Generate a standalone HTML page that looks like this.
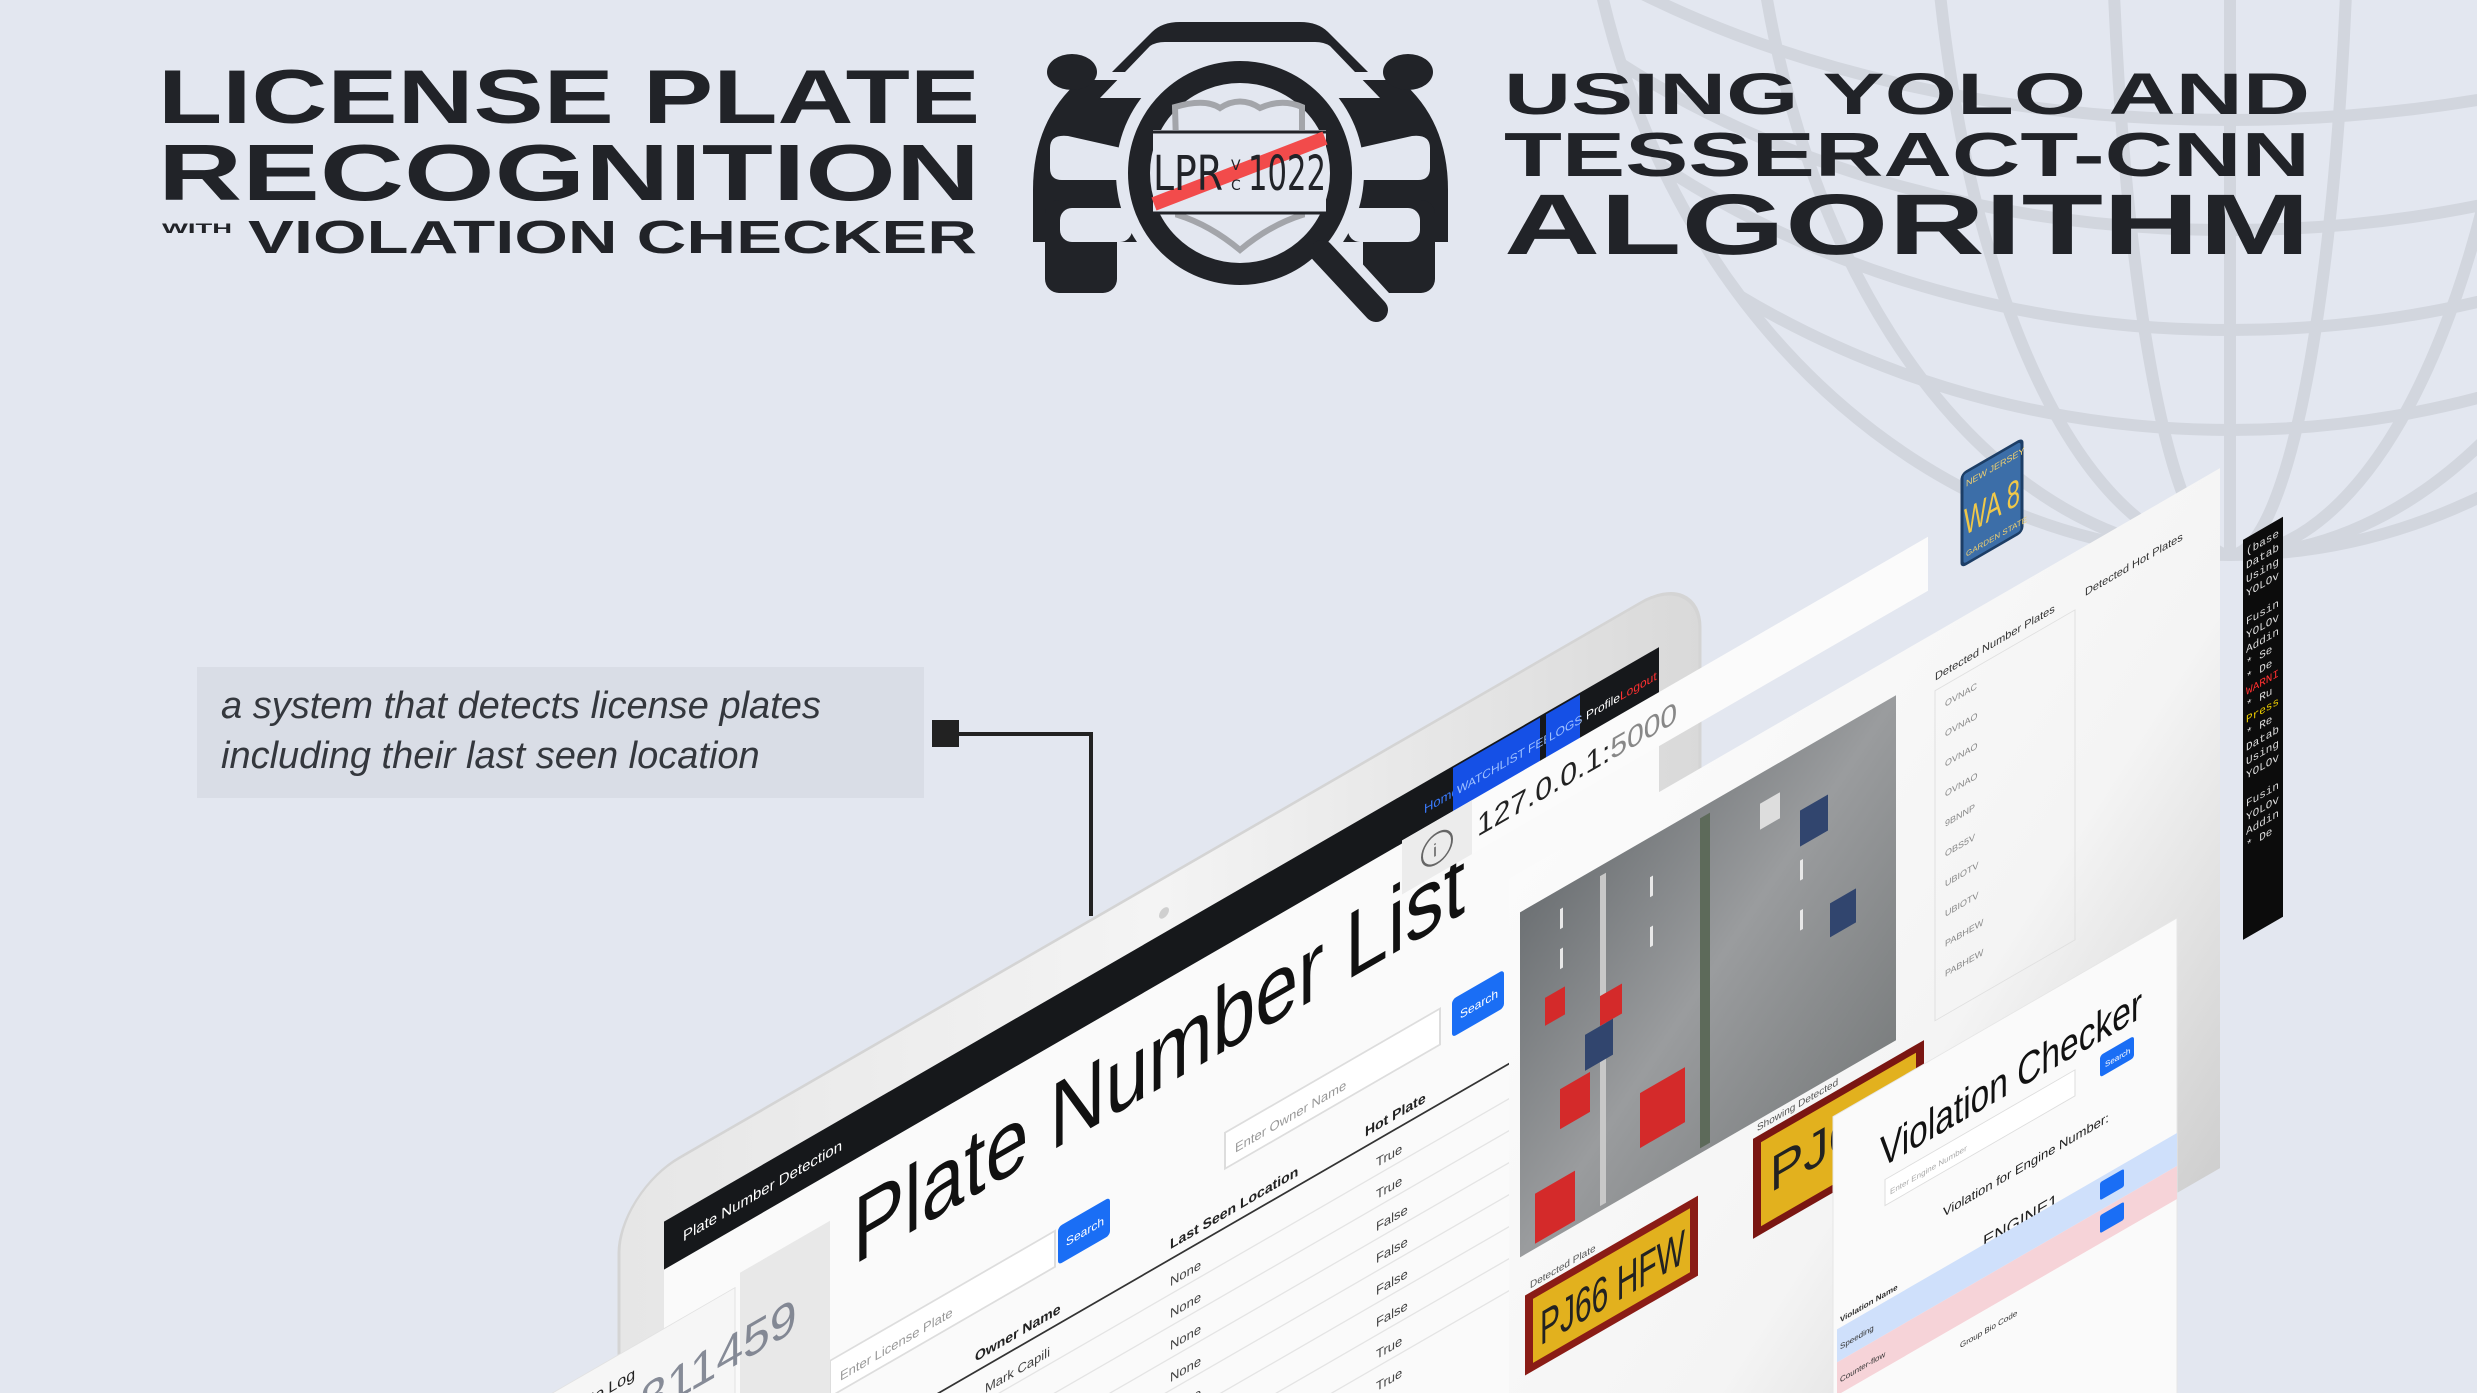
<!DOCTYPE html>
<html><head><meta charset="utf-8"><style>
html,body{margin:0;padding:0;background:#e3e7f0;}
body{width:2477px;height:1393px;overflow:hidden;position:relative;font-family:"Liberation Sans",sans-serif;}
svg{position:absolute;left:0;top:0;overflow:hidden;}
</style></head><body>
<svg width="2477" height="1393" viewBox="0 0 2477 1393" xmlns="http://www.w3.org/2000/svg">
<defs>
<linearGradient id="lap" x1="0" y1="0" x2="1" y2="0"><stop offset="0" stop-color="#e6e6e6"/><stop offset="0.5" stop-color="#f4f4f4"/><stop offset="1" stop-color="#d9d9d9"/></linearGradient>
<linearGradient id="pan" x1="0" y1="0" x2="1" y2="1"><stop offset="0" stop-color="#fbfbfb"/><stop offset="0.6" stop-color="#f4f4f4"/><stop offset="1" stop-color="#cfcfcf"/></linearGradient>
<linearGradient id="road" x1="0" y1="0" x2="1" y2="1"><stop offset="0" stop-color="#6d7174"/><stop offset="0.5" stop-color="#9a9c9e"/><stop offset="1" stop-color="#7c7f80"/></linearGradient>
<clipPath id="globe"><ellipse cx="2230" cy="-200" rx="650" ry="755"/></clipPath>
<clipPath id="frame"><rect x="0" y="0" width="2477" height="1393"/></clipPath>
</defs>
<g clip-path="url(#frame)">
<!-- globe -->
<g fill="none" stroke="#d2d6de" stroke-width="12">
<ellipse cx="2230" cy="-200" rx="650" ry="755"/>
<g clip-path="url(#globe)">
<ellipse cx="2230" cy="-400" rx="900" ry="630"/>
<ellipse cx="2230" cy="-400" rx="900" ry="730"/>
<ellipse cx="2230" cy="-400" rx="900" ry="830"/>
<ellipse cx="2230" cy="-400" rx="900" ry="520"/>
<ellipse cx="2230" cy="-200" rx="120" ry="755"/>
<ellipse cx="2230" cy="-200" rx="300" ry="755"/>
<ellipse cx="2230" cy="-200" rx="480" ry="755"/>
<line x1="2230" y1="-960" x2="2230" y2="560"/>
</g>
</g>
<!-- titles -->
<g fill="#212328" font-family="Liberation Sans, sans-serif" font-weight="bold">
<text x="158" y="123" font-size="76" textLength="822" lengthAdjust="spacingAndGlyphs">LICENSE PLATE</text>
<text x="158" y="200" font-size="80" textLength="822" lengthAdjust="spacingAndGlyphs">RECOGNITION</text>
<text x="162" y="233" font-size="14" textLength="70" lengthAdjust="spacingAndGlyphs">WITH</text>
<text x="248" y="253" font-size="46" textLength="729" lengthAdjust="spacingAndGlyphs">VIOLATION CHECKER</text>
<text x="1504" y="114" font-size="58" textLength="806" lengthAdjust="spacingAndGlyphs">USING YOLO AND</text>
<text x="1504" y="176" font-size="62" textLength="806" lengthAdjust="spacingAndGlyphs">TESSERACT-CNN</text>
<text x="1504" y="254" font-size="86" textLength="806" lengthAdjust="spacingAndGlyphs">ALGORITHM</text>
</g>
<!-- logo -->
<g transform="translate(1020,10)">
<g fill="#212328">
<path d="M92 62 L132 22 Q142 12 160 12 L280 12 Q298 12 308 22 L348 62 Z"/>
<path d="M60 70 L380 70 Q428 110 428 180 L428 232 L13 232 L13 180 Q13 110 60 70 Z"/>
<rect x="25" y="190" width="72" height="93" rx="14"/>
<rect x="343" y="190" width="72" height="93" rx="14"/>
<ellipse cx="52" cy="62" rx="25" ry="18"/><ellipse cx="388" cy="62" rx="25" ry="18"/>
</g>
<g fill="#e3e7f0">
<path d="M80 88 L130 36 Q136 32 145 32 L295 32 Q304 32 310 36 L360 88 Z"/>
<path d="M30 138 Q30 124 48 126 L110 140 L110 170 L42 170 Q30 170 30 158 Z"/>
<path d="M410 138 Q410 124 392 126 L330 140 L330 170 L398 170 Q410 170 410 158 Z"/>
<rect x="40" y="198" width="72" height="34" rx="12"/>
<rect x="328" y="198" width="72" height="34" rx="12"/>
<rect x="97" y="232" width="246" height="60"/>
<circle cx="220" cy="163" r="124"/>
<line x1="300" y1="240" x2="362" y2="308" stroke="#e3e7f0" stroke-width="44" stroke-linecap="round"/>
</g>
<circle cx="220" cy="163" r="101" fill="none" stroke="#212328" stroke-width="22"/>
<line x1="302" y1="242" x2="356" y2="300" stroke="#212328" stroke-width="24" stroke-linecap="round"/>
<path d="M155 97 Q185 88 200 98 Q220 85 240 98 Q262 88 282 97 L282 205 Q250 215 220 240 Q190 215 158 205 Z" fill="none" stroke="#a3a5aa" stroke-width="6"/>
<rect x="133" y="120" width="173" height="84" fill="#e3e7f0"/>
<line x1="133" y1="122" x2="306" y2="122" stroke="#212328" stroke-width="3"/>
<line x1="133" y1="203" x2="306" y2="203" stroke="#212328" stroke-width="3"/>
<line x1="134" y1="194" x2="305" y2="128" stroke="#f24b4b" stroke-width="14"/>
<text x="133" y="180" font-family="DejaVu Sans Condensed, Liberation Sans Narrow, sans-serif" font-size="48" fill="#212328" textLength="70" lengthAdjust="spacingAndGlyphs">LPR</text>
<text x="211" y="160" font-family="DejaVu Sans, sans-serif" font-size="14" fill="#212328">V</text>
<text x="211" y="180" font-family="DejaVu Sans, sans-serif" font-size="14" fill="#212328">C</text>
<text x="228" y="180" font-family="DejaVu Sans Condensed, Liberation Sans Narrow, sans-serif" font-size="48" fill="#212328" textLength="78" lengthAdjust="spacingAndGlyphs">1022</text>
</g>
<!-- caption -->
<rect x="197" y="667" width="727" height="131" fill="#d9dde6"/>
<g font-family="Liberation Sans, sans-serif" font-style="italic" font-size="38" fill="#34373d">
<text x="221" y="718">a system that detects license plates</text>
<text x="221" y="768">including their last seen location</text>
</g>
<rect x="932" y="720" width="27" height="27" fill="#222"/>
<path d="M959 734 H1091 V916" fill="none" stroke="#222" stroke-width="4"/>

<!-- skewed mockups -->
<g transform="matrix(1,-0.5774,0,1,0,0)" font-family="Liberation Sans, sans-serif">
<rect x="619" y="1550" width="1081" height="1000" rx="60" fill="url(#lap)" stroke="#d4d4d4" stroke-width="3"/>
<rect x="664" y="1605" width="995" height="900" fill="#fafafa"/>
<rect x="664" y="1605" width="995" height="48" fill="#16181b"/>
<circle cx="1164" cy="1585" r="5" fill="#cfcfcf"/>
<text x="683" y="1636" font-size="15" fill="#fff">Plate Number Detection</text>
<text x="1424" y="1636" font-size="13" fill="#3a7bff">Home</text>
<rect x="1453" y="1607" width="87" height="44" fill="#1550e6"/><text x="1457" y="1636" font-size="12" fill="#9ec0ff">WATCHLIST FEED</text>
<rect x="1546" y="1607" width="34" height="44" fill="#1550e6"/><text x="1549" y="1636" font-size="12" fill="#9ec0ff">LOGS</text>
<text x="1586" y="1636" font-size="12" fill="#fff">Profile</text>
<text x="1620" y="1636" font-size="12" fill="#ff3030">Logout</text>
<text x="853" y="1758" font-size="94" fill="#111" textLength="612" lengthAdjust="spacingAndGlyphs">Plate Number List</text>
<rect x="830" y="1840" width="225" height="36" fill="#fff" stroke="#ddd" stroke-width="2"/>
<text x="840" y="1866" font-size="13" fill="#999">Enter License Plate</text>
<rect x="1058" y="1838" width="52" height="38" rx="4" fill="#1a6ef5"/><text x="1066" y="1862" font-size="12" fill="#fff">Search</text>
<rect x="1225" y="1840" width="215" height="36" fill="#fff" stroke="#ddd" stroke-width="2"/>
<text x="1235" y="1866" font-size="13" fill="#999">Enter Owner Name</text>
<rect x="1452" y="1838" width="52" height="38" rx="4" fill="#1a6ef5"/><text x="1460" y="1862" font-size="12" fill="#fff">Search</text>
<g font-size="14" font-weight="bold" fill="#222"><text x="975" y="1925">Owner Name</text><text x="1170" y="1925">Last Seen Location</text><text x="1365" y="1925">Hot Plate</text></g>
<line x1="830" y1="1935" x2="1660" y2="1935" stroke="#333" stroke-width="2"/>
<g font-size="13" fill="#444">
<text x="985" y="1962">Mark Capili</text>
<text x="1170" y="1962">None</text><text x="1376" y="1962">True</text>
<text x="1170" y="1994">None</text><text x="1376" y="1994">True</text>
<text x="1170" y="2026">None</text><text x="1376" y="2026">False</text>
<text x="1170" y="2058">None</text><text x="1376" y="2058">False</text>
<text x="1170" y="2090">None</text><text x="1376" y="2090">False</text>
<text x="1170" y="2122">None</text><text x="1376" y="2122">False</text>
<text x="1170" y="2154">None</text><text x="1376" y="2154">True</text>
<text x="1170" y="2186">None</text><text x="1376" y="2186">True</text>
</g>
<g stroke="#e4e4e4" stroke-width="1.5"><line x1="830" y1="1970" x2="1660" y2="1970"/><line x1="830" y1="2002" x2="1660" y2="2002"/><line x1="830" y1="2034" x2="1660" y2="2034"/><line x1="830" y1="2066" x2="1660" y2="2066"/><line x1="830" y1="2098" x2="1660" y2="2098"/><line x1="830" y1="2130" x2="1660" y2="2130"/><line x1="830" y1="2162" x2="1660" y2="2162"/></g>
<rect x="1402" y="1650" width="526" height="54" fill="#fbfbfb"/>
<rect x="1402" y="1650" width="70" height="54" fill="#ececec"/>
<circle cx="1437" cy="1678" r="15" fill="none" stroke="#666" stroke-width="2"/><text x="1433" y="1685" font-size="18" fill="#666">i</text>
<text x="1477" y="1690" font-size="30" fill="#222">127.0.0.1:<tspan fill="#888">5000</tspan></text>
<rect x="1509" y="1750" width="711" height="700" fill="url(#pan)"/>
<rect x="1520" y="1790" width="376" height="345" fill="url(#road)"/>
<g fill="#c8c8c8"><rect x="1600" y="1800" width="6" height="330"/><rect x="1700" y="1800" width="10" height="330" fill="#5d6a5a"/></g>
<g fill="#e8e8e8"><rect x="1560" y="1810" width="3" height="20"/><rect x="1560" y="1850" width="3" height="20"/><rect x="1650" y="1830" width="3" height="20"/><rect x="1650" y="1880" width="3" height="20"/><rect x="1800" y="1900" width="3" height="20"/><rect x="1800" y="1950" width="3" height="20"/></g>
<g fill="#d42a2a"><rect x="1535" y="2080" width="40" height="50"/><rect x="1560" y="1990" width="30" height="40"/><rect x="1640" y="2040" width="45" height="55"/><rect x="1600" y="1920" width="22" height="30"/><rect x="1545" y="1890" width="20" height="28"/></g>
<g fill="#31456e"><rect x="1585" y="1950" width="28" height="36"/><rect x="1800" y="1850" width="28" height="36"/><rect x="1760" y="1820" width="20" height="26" fill="#ddd"/><rect x="1830" y="1960" width="26" height="34"/></g>
<text x="1530" y="2172" font-size="10" fill="#555">Detected Plate</text>
<rect x="1529" y="2180" width="165" height="72" fill="#e2b11e" stroke="#8a1c16" stroke-width="8"/>
<text x="1540" y="2235" font-size="48" fill="#222" textLength="145" lengthAdjust="spacingAndGlyphs">PJ66 HFW</text>
<text x="1757" y="2146" font-size="10" fill="#555">Showing Detected</text>
<rect x="1757" y="2155" width="163" height="92" fill="#e2b11e" stroke="#7a1612" stroke-width="8"/>
<text x="1770" y="2215" font-size="50" fill="#222">PJ6</text>
<text x="1935" y="1798" font-size="11" fill="#333">Detected Number Plates</text>
<text x="2085" y="1800" font-size="11" fill="#333">Detected Hot Plates</text>
<rect x="1935" y="1808" width="140" height="330" fill="none" stroke="#e0e0e0"/>
<g font-size="9" fill="#888"><text x="1945" y="1830">OVNAC</text><text x="1945" y="1860">OVNAO</text><text x="1945" y="1890">OVNAO</text><text x="1945" y="1920">OVNAO</text><text x="1945" y="1950">9BNNP</text><text x="1945" y="1980">OBS5V</text><text x="1945" y="2010">UBIOTV</text><text x="1945" y="2040">UBIOTV</text><text x="1945" y="2070">PABHEW</text><text x="1945" y="2100">PABHEW</text></g>
<rect x="1962" y="1607" width="60" height="92" rx="4" fill="#3c6ea8" stroke="#1d3e66" stroke-width="3"/>
<text x="1966" y="1622" font-size="9" fill="#f0d070">NEW JERSEY</text>
<text x="1964" y="1670" font-size="38" fill="#f0c848" textLength="56" lengthAdjust="spacingAndGlyphs">WA 8</text>
<text x="1966" y="1692" font-size="8" fill="#f0d070">GARDEN STATE</text>
<rect x="2243" y="1835" width="40" height="400" fill="#0c0c0c"/>
<g font-family="Liberation Mono, monospace" font-size="11" fill="#ddd">
<text x="2246" y="1852">(base</text><text x="2246" y="1866">Datab</text><text x="2246" y="1880">Using</text><text x="2246" y="1894">YOLOv</text>
<text x="2246" y="1922">Fusin</text><text x="2246" y="1936">YOLOv</text><text x="2246" y="1950">Addin</text><text x="2246" y="1964"> * Se</text><text x="2246" y="1978"> * De</text>
<text x="2246" y="1992" fill="#ff3030">WARNI</text><text x="2246" y="2006"> * Ru</text><text x="2246" y="2020" fill="#f0d000">Press</text><text x="2246" y="2034"> * Re</text><text x="2246" y="2048">Datab</text><text x="2246" y="2062">Using</text><text x="2246" y="2076">YOLOv</text>
<text x="2246" y="2104">Fusin</text><text x="2246" y="2118">YOLOv</text><text x="2246" y="2132">Addin</text><text x="2246" y="2146"> * De</text>
</g>
<rect x="1833" y="2175" width="344" height="500" fill="#fafafa" stroke="#e6e6e6"/>
<text x="1880" y="2254" font-size="44" fill="#111" textLength="262" lengthAdjust="spacingAndGlyphs">Violation Checker</text>
<rect x="1885" y="2268" width="190" height="26" fill="#fff" stroke="#ddd"/><text x="1890" y="2286" font-size="8" fill="#aaa">Enter Engine Number</text>
<rect x="2100" y="2268" width="34" height="22" rx="3" fill="#1a6ef5"/><text x="2105" y="2283" font-size="8" fill="#fff">Search</text>
<text x="1943" y="2339" font-size="13" fill="#222">Violation for Engine Number:</text>
<text x="1983" y="2393" font-size="17" fill="#222">ENGINE1</text>
<rect x="1837" y="2390" width="340" height="33" fill="#cfe0fb"/>
<rect x="1837" y="2423" width="340" height="33" fill="#f6d3d8"/>
<rect x="2100" y="2395" width="24" height="18" rx="2" fill="#1a6ef5"/>
<rect x="2100" y="2428" width="24" height="18" rx="2" fill="#1a6ef5"/>
<g font-size="8" fill="#333"><text x="1840" y="2385" font-weight="bold">Violation Name</text><text x="1840" y="2412">Speeding</text><text x="1840" y="2445">Counter-flow</text><text x="1960" y="2480">Group Bio Code</text></g>
<rect x="740" y="1700" width="90" height="400" fill="#e8e8e8"/>
<rect x="521" y="1712" width="214" height="400" fill="#f6f6f6" stroke="#e2e2e2"/>
<text x="540" y="1745" font-size="16" fill="#222">ber Plate Log</text>
<text x="640" y="1790" font-size="48" fill="#6b7180" opacity="0.8">811459</text>
</g>
</g>
</svg>
</body></html>
